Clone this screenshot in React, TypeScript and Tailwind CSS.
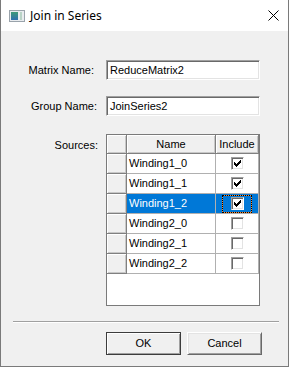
import React from 'react';

interface Row {
  name: string;
  include: boolean;
  selected?: boolean;
}

const rows: Row[] = [
  { name: 'Winding1_0', include: true },
  { name: 'Winding1_1', include: true },
  { name: 'Winding1_2', include: true, selected: true },
  { name: 'Winding2_0', include: false },
  { name: 'Winding2_1', include: false },
  { name: 'Winding2_2', include: false },
];

const CheckBox = ({ checked }: { checked: boolean }) => (
  <div className="w-[13px] h-[13px] bg-white border border-t-[#a0a0a0] border-l-[#a0a0a0] border-r-white border-b-white shadow-[inset_1px_1px_0_#696969,inset_-1px_-1px_0_#e3e3e3]">
    {checked && (
      <svg width="11" height="11" viewBox="0 0 11 11" className="block">
        <path d="M2 4h1v1h1v1h1V5h1V4h1V3h1V2h1v3H8v1H7v1H6v1H5v1H4V8H3V7H2z" fill="#000" />
      </svg>
    )}
  </div>
);

const TitleIcon = () => (
  <svg width="16" height="12" viewBox="0 0 16 12" className="block">
    <defs>
      <linearGradient id="ti" x1="0" y1="0" x2="0" y2="1">
        <stop offset="0" stopColor="#3f9a78" />
        <stop offset="1" stopColor="#2f6fb0" />
      </linearGradient>
    </defs>
    <rect x="0.5" y="0.5" width="15" height="11" fill="#e9ecef" stroke="#9aa3ab" />
    <rect x="2" y="2" width="7" height="8" fill="url(#ti)" />
    <rect x="11" y="2" width="2" height="8" fill="#b9d3c6" />
  </svg>
);

const Field = ({ label, value, pr }: { label: string; value: string; pr: string }) => (
  <div className="flex items-center">
    <div className={`w-[96px] text-right ${pr}`}>{label}</div>
    <div className="ml-[9px] w-[154px] h-[20px] bg-white flex items-center pl-[3px] border border-t-[#a0a0a0] border-l-[#a0a0a0] border-r-white border-b-white shadow-[inset_1px_1px_0_#696969,inset_-1px_-1px_0_#e3e3e3]">
      {value}
    </div>
  </div>
);

const raised = 'bg-[#f0f0f0] border-r border-b border-[#808080] shadow-[inset_1px_1px_0_#fff,inset_-1px_-1px_0_#c8c8c8]';

export default function App() {
  return (
    <div
      className="w-[289px] h-[367px] flex flex-col border-x border-b border-[#7a7a7a] text-[11px] text-black leading-none"
      style={{ fontFamily: '"Liberation Sans", Arial, sans-serif' }}
    >
      <div className="h-[31px] bg-white flex items-center pl-[8px] pr-[9px] shrink-0">
        <TitleIcon />
        <span className="ml-[5px] text-[12px] flex-1" style={{ fontFamily: '"Noto Sans", "Open Sans", sans-serif' }}>
          Join in Series
        </span>
        <svg width="11" height="11" viewBox="0 0 11 11" className="block">
          <path d="M0.5 0.5L10.5 10.5M10.5 0.5L0.5 10.5" stroke="#000" strokeWidth="1" />
        </svg>
      </div>

      <div className="flex-1 bg-[#f0f0f0] flex flex-col pt-[29px]">
        <Field label="Matrix Name:" value="ReduceMatrix2" pr="pr-[3px]" />
        <div className="mt-[16px]">
          <Field label="Group Name:" value="JoinSeries2" pr="" />
        </div>

        <div className="mt-[18px] flex items-start">
          <div className="w-[97px] text-right pt-[6px]">Sources:</div>
          <div className="ml-[8px] w-[154px] h-[172px] bg-white border border-[#7a7a7a] flex flex-col">
            <div className="flex h-[19px] shrink-0">
              <div className={`w-[20px] ${raised}`} />
              <div className={`w-[89px] ${raised} flex items-center justify-center`}>Name</div>
              <div className={`flex-1 ${raised} flex items-center justify-center`}>Include</div>
            </div>
            {rows.map((r) => (
              <div key={r.name} className="flex h-[20px] shrink-0">
                <div className={`w-[20px] ${raised}`} />
                <div
                  className={`w-[89px] flex items-center pl-[2px] border-r border-b border-[#b0b0b0] ${
                    r.selected ? 'bg-[#0078d7] text-white' : 'bg-white'
                  }`}
                >
                  {r.name}
                </div>
                <div
                  className={`flex-1 flex items-center justify-center border-r border-b border-[#b0b0b0] ${
                    r.selected ? 'bg-[#0078d7]' : 'bg-white'
                  }`}
                >
                  {r.selected ? (
                    <div className="w-[30px] h-[18px] bg-[#ff8728] border border-dotted border-black">
                      <div className="w-full h-full bg-[#0078d7] flex items-center justify-center">
                        <CheckBox checked={r.include} />
                      </div>
                    </div>
                  ) : (
                    <CheckBox checked={r.include} />
                  )}
                </div>
              </div>
            ))}
          </div>
        </div>

        <div className="mt-[15px] ml-[12px] w-[266px] h-[2px] border-t border-t-[#a0a0a0] border-b border-b-white" />

        <div className="mt-[9px] ml-[105px] flex gap-[6px]">
          <button className="w-[75px] h-[23px] bg-[#f0f0f0] border border-[#3c3c3c] shadow-[inset_1px_1px_0_#fff,inset_-1px_-1px_0_#a0a0a0] flex items-center justify-center">
            OK
          </button>
          <button className="w-[75px] h-[23px] bg-[#f0f0f0] border border-t-[#fff] border-l-[#fff] border-r-[#696969] border-b-[#696969] shadow-[inset_1px_1px_0_#e3e3e3,inset_-1px_-1px_0_#a0a0a0] flex items-center justify-center">
            Cancel
          </button>
        </div>
      </div>
    </div>
  );
}
